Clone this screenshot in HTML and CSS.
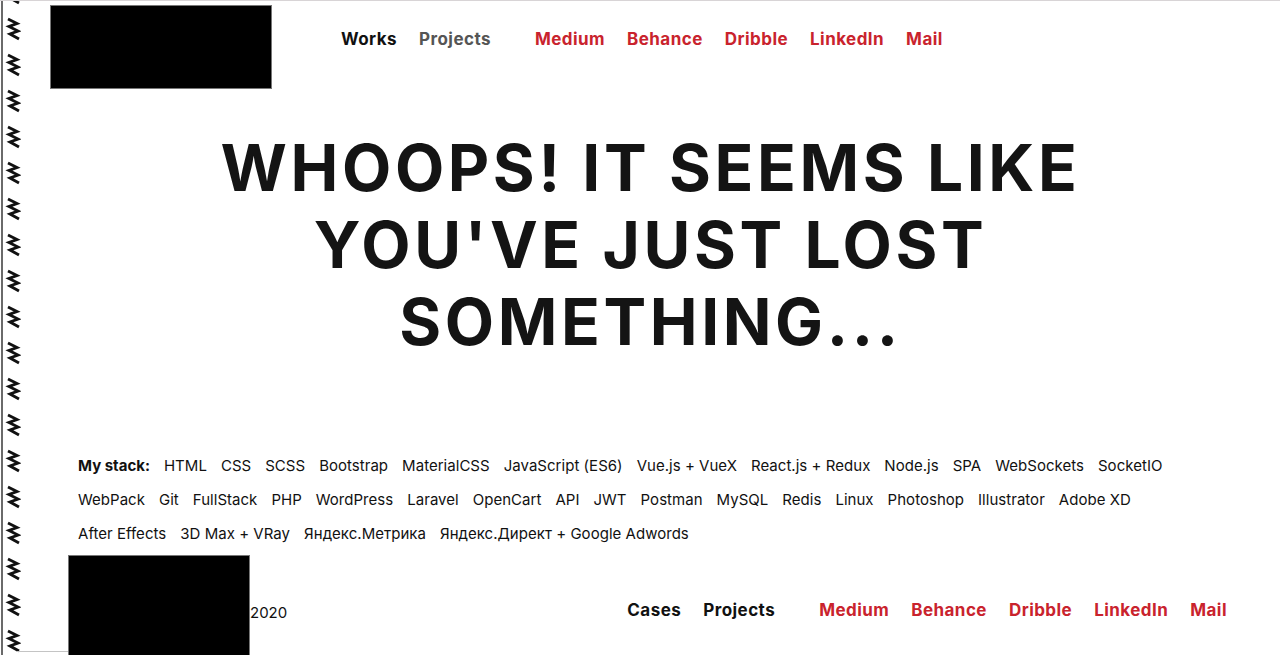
FILE: index.html
```html
<!DOCTYPE html>
<html lang="en">
<head>
<meta charset="utf-8">
<title>404</title>
<link rel="stylesheet" href="styles.css">
</head>
<body>
<div class="page">
  <div class="rail">
    <svg class="rail-svg" width="18" height="656" xmlns="http://www.w3.org/2000/svg">
      <defs>
        <path id="mk" d="M5 1 L14 5.5 L6 8.5 L15 13 L7 16 L16 21" fill="none" stroke="#111" stroke-width="2.9" stroke-linejoin="miter" stroke-linecap="butt"/>
        <pattern id="zig" x="0" y="0" width="18" height="36" patternUnits="userSpaceOnUse">
          <use href="#mk" transform="translate(0,18)"/>
          <use href="#mk" transform="translate(0,-18)"/>
        </pattern>
      </defs>
      <rect x="0" y="0" width="18" height="656" fill="url(#zig)"/>
    </svg>
  </div>
  <div class="rail-foot"></div>
  <div class="main">
    <header class="header">
      <div class="logo"></div>
      <nav class="nav">
        <div class="nav-group">
          <a class="nav-link dark">Works</a>
          <a class="nav-link grey">Projects</a>
        </div>
        <div class="nav-group">
          <a class="nav-link red">Medium</a>
          <a class="nav-link red">Behance</a>
          <a class="nav-link red">Dribble</a>
          <a class="nav-link red">LinkedIn</a>
          <a class="nav-link red">Mail</a>
        </div>
      </nav>
    </header>
    <h1 class="title">WHOOPS! IT SEEMS LIKE<br>YOU'VE JUST LOST<br>SOMETHING...</h1>
    <section class="stack">
      <span class="stack-label">My stack:</span>
      <span>HTML</span><span>CSS</span><span>SCSS</span><span>Bootstrap</span><span>MaterialCSS</span><span>JavaScript (ES6)</span><span>Vue.js + VueX</span><span>React.js + Redux</span><span>Node.js</span><span>SPA</span><span>WebSockets</span><span>SocketIO</span>
      <span>WebPack</span><span>Git</span><span>FullStack</span><span>PHP</span><span>WordPress</span><span>Laravel</span><span>OpenCart</span><span>API</span><span>JWT</span><span>Postman</span><span>MySQL</span><span>Redis</span><span>Linux</span><span>Photoshop</span><span>Illustrator</span><span>Adobe XD</span>
      <span>After Effects</span><span>3D Max + VRay</span><span>Яндекс.Метрика</span><span>Яндекс.Директ + Google Adwords</span>
    </section>
    <footer class="footer">
      <div class="copy">
        <div class="foot-logo"></div>
        <span class="year">2020</span>
      </div>
      <nav class="nav foot-nav">
        <div class="nav-group">
          <a class="nav-link dark">Cases</a>
          <a class="nav-link dark">Projects</a>
        </div>
        <div class="nav-group">
          <a class="nav-link red">Medium</a>
          <a class="nav-link red">Behance</a>
          <a class="nav-link red">Dribble</a>
          <a class="nav-link red">LinkedIn</a>
          <a class="nav-link red">Mail</a>
        </div>
      </nav>
    </footer>
  </div>
</div>
</body>
</html>
```
FILE: styles.css
```css
* { box-sizing: border-box; }
html, body { margin: 0; padding: 0; background: #fff; }
body {
  font-family: Inter, "Open Sans", sans-serif;
  color: #111;
  overflow: hidden;
}
.page {
  display: flex;
  height: 655px;
  border-top: 1px solid #d8d4d6;
  position: relative;
}
.rail {
  width: 20px;
  flex: none;
  margin-left: 1px;
  border-left: 2px solid #6a6a6a;
  overflow: hidden;
}
.rail-svg { display: block; margin-top: -1px; }
.rail-foot {
  position: absolute;
  left: 17px;
  bottom: 3px;
  width: 51px;
  height: 1px;
  background: #c4c4c4;
}
.main {
  flex: 1;
  display: flex;
  flex-direction: column;
  min-width: 0;
}
.header {
  display: flex;
  align-items: flex-start;
  padding: 4px 0 0 29px;
}
.logo {
  width: 222px;
  height: 84px;
  background: #000;
  border: 1px solid #777;
}
.nav {
  display: flex;
  gap: 44px;
  font-weight: 700;
  font-size: 17px;
  letter-spacing: 0.45px;
}
.header .nav { margin: 24px 0 0 69px; }
.nav-group { display: flex; gap: 22px; }
.nav-link { text-decoration: none; cursor: pointer; }
.dark { color: #111; }
.grey { color: #555; }
.red { color: #c9232d; }
.title {
  margin: 40px 0 0;
  text-align: center;
  font-size: 64px;
  line-height: 77px;
  font-weight: 700;
  letter-spacing: 3.6px;
  color: #141414;
}
.stack {
  display: flex;
  flex-wrap: wrap;
  column-gap: 14px;
  row-gap: 13px;
  padding: 0 60px 0 57px;
  margin-top: 95px;
  font-size: 15px;
  line-height: 21px;
  letter-spacing: 0.03px;
  color: #111;
}
.stack-label { font-weight: 700; letter-spacing: 0; }
.footer {
  margin-top: auto;
  display: flex;
  align-items: center;
  justify-content: space-between;
  padding: 0 53px 0 47px;
  height: 100px;
}
.copy { display: flex; align-items: center; height: 100%; }
.foot-logo {
  width: 182px;
  height: 100px;
  background: #000;
  border: 1px solid #777;
  border-bottom: none;
}
.year { font-size: 15px; margin-top: 14px; }
.foot-nav { margin-top: 9px; }
```
